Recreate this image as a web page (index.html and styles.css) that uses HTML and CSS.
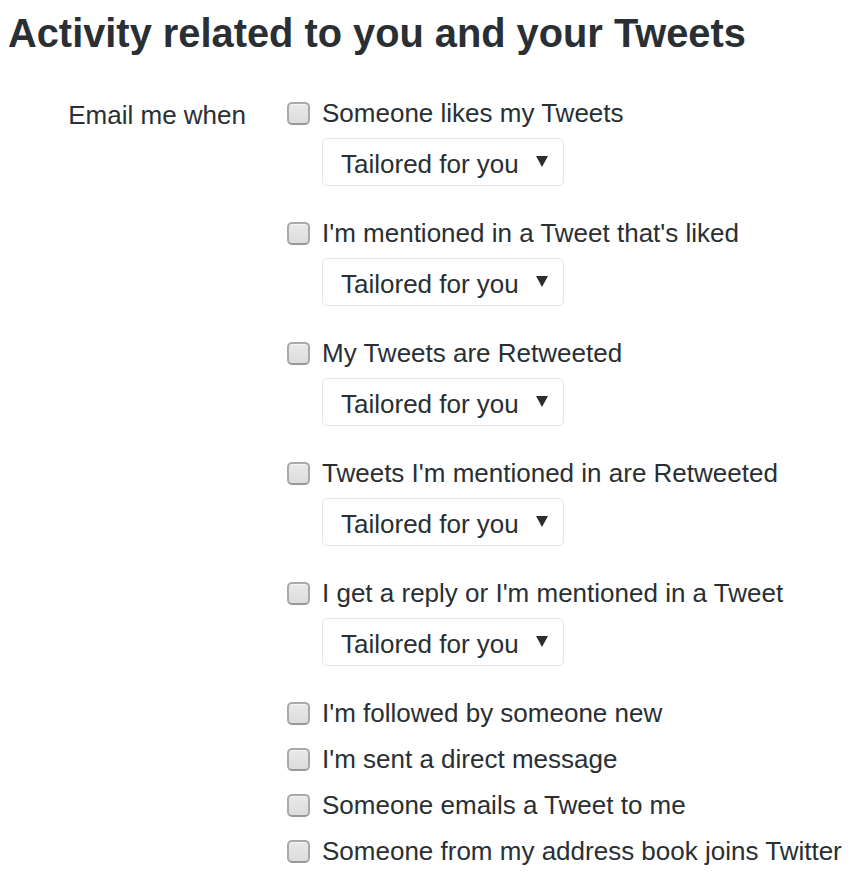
FILE: index.html
```html
<!DOCTYPE html>
<html lang="en">
<head>
<meta charset="utf-8">
<title>Email notifications</title>
<link rel="stylesheet" href="styles.css">
</head>
<body>
<h1 class="title">Activity related to you and your Tweets</h1>
<div class="group">
  <div class="group-label">Email me when</div>
  <div class="group-controls">
    <div class="item">
      <label class="check"><span class="box"></span><span class="text">Someone likes my Tweets</span></label>
      <div class="select"><span class="select-text">Tailored for you</span><span class="arrow"></span></div>
    </div>
    <div class="item">
      <label class="check"><span class="box"></span><span class="text">I'm mentioned in a Tweet that's liked</span></label>
      <div class="select"><span class="select-text">Tailored for you</span><span class="arrow"></span></div>
    </div>
    <div class="item">
      <label class="check"><span class="box"></span><span class="text">My Tweets are Retweeted</span></label>
      <div class="select"><span class="select-text">Tailored for you</span><span class="arrow"></span></div>
    </div>
    <div class="item">
      <label class="check"><span class="box"></span><span class="text">Tweets I'm mentioned in are Retweeted</span></label>
      <div class="select"><span class="select-text">Tailored for you</span><span class="arrow"></span></div>
    </div>
    <div class="item">
      <label class="check"><span class="box"></span><span class="text">I get a reply or I'm mentioned in a Tweet</span></label>
      <div class="select"><span class="select-text">Tailored for you</span><span class="arrow"></span></div>
    </div>
    <div class="item">
      <label class="check"><span class="box"></span><span class="text">I'm followed by someone new</span></label>
    </div>
    <div class="item">
      <label class="check"><span class="box"></span><span class="text">I'm sent a direct message</span></label>
    </div>
    <div class="item">
      <label class="check"><span class="box"></span><span class="text">Someone emails a Tweet to me</span></label>
    </div>
    <div class="item">
      <label class="check"><span class="box"></span><span class="text">Someone from my address book joins Twitter</span></label>
    </div>
  </div>
</div>
</body>
</html>
```

FILE: styles.css
```css
html, body {
  margin: 0;
  padding: 0;
  background: #ffffff;
}
body {
  padding: 9px 0 0 8px;
  font-family: "Liberation Sans", Arial, sans-serif;
  color: #292f33;
}
.title {
  margin: 0;
  font-size: 39.8px;
  line-height: 48px;
  font-weight: bold;
  color: #292f33;
}
.group {
  display: grid;
  grid-template-columns: 238px auto;
  column-gap: 41px;
  margin-top: 41px;
}
.group-label {
  text-align: right;
  font-size: 26px;
  line-height: 30px;
  padding-top: 2px;
}
.group-controls {
  display: flex;
  flex-direction: column;
  gap: 16px;
}
.item {
  display: flex;
  flex-direction: column;
}
.check {
  display: flex;
  align-items: flex-start;
  font-size: 26px;
  line-height: 30px;
  white-space: nowrap;
}
.box {
  box-sizing: border-box;
  width: 23px;
  height: 23px;
  margin-top: 4px;
  margin-right: 12px;
  border: 2px solid #a9a9a9;
  border-bottom-color: #999999;
  border-radius: 5px;
  background: linear-gradient(#e9e9e9, #dcdcdc);
  box-shadow: inset 0 1px 0 #f4f4f4;
  flex: none;
}
.select {
  box-sizing: border-box;
  display: flex;
  align-items: center;
  justify-content: space-between;
  width: 242px;
  height: 48px;
  margin: 10px 0 16px 35px;
  padding: 0 15px 0 18px;
  border: 1px solid #e1e8ed;
  border-radius: 5px;
  font-size: 26px;
  background: #ffffff;
}
.select-text {
  padding-top: 4px;
}
.arrow {
  width: 0;
  height: 0;
  border-left: 6px solid transparent;
  border-right: 6px solid transparent;
  border-top: 11px solid #292f33;
  margin-top: -2px;
}
```
